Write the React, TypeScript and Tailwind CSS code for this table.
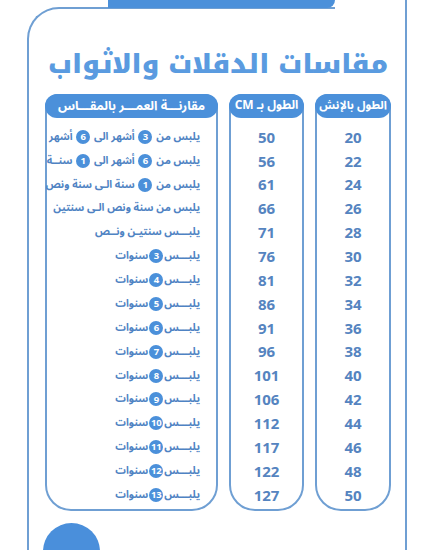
import React from "react";

const inches = [20, 22, 24, 26, 28, 30, 32, 34, 36, 38, 40, 42, 44, 46, 48, 50];
const cms = [50, 56, 61, 66, 71, 76, 81, 86, 91, 96, 101, 106, 112, 117, 122, 127];

const Badge: React.FC<{ n: number }> = ({ n }) => (
  <span className="inline-flex items-center justify-center w-[14px] h-[14px] mx-[1px] rounded-full bg-[#4b90da] text-white text-[9.5px] font-bold align-middle font-['Open_Sans',sans-serif] leading-none">
    {n}
  </span>
);

const ages: React.ReactNode[] = [
  <>يلبس من <Badge n={3} /> أشهر الى <Badge n={6} /> أشهر</>,
  <>يلبس من <Badge n={6} /> أشهر الى <Badge n={1} /> سنــة</>,
  <>يلبس من <Badge n={1} /> سنة الـى سنة ونص</>,
  <>يلبس من سنة ونص الـى سنتين</>,
  <>يلبـــس سنتيـن ونــص</>,
  ...[3, 4, 5, 6, 7, 8, 9, 10, 11, 12, 13].map((n) => (
    <>
      يلبـــس<Badge n={n} />سنوات
    </>
  )),
];

const Column: React.FC<{ title: string; width: string; size: string; children: React.ReactNode }> = ({
  title,
  width,
  size,
  children,
}) => (
  <div className={`${width} border-2 border-[#6f9fd3] rounded-t-[13px] rounded-b-[26px] pb-[2px]`}>
    <div
      dir="rtl"
      className={`h-[24px] -mx-[2px] -mt-[2px] bg-[#4b90da] rounded-[12px] flex items-center justify-center text-white ${size} font-bold whitespace-nowrap leading-none`}
    >
      {title}
    </div>
    <div className="pt-[7px]">{children}</div>
  </div>
);

export default function App() {
  return (
    <div className="relative w-[433px] h-[550px] overflow-hidden bg-white font-['Noto_Sans_Arabic','DejaVu_Sans',sans-serif]">
      {/* top tab */}
      <div className="absolute left-[108px] top-0 w-[227px] h-[8px] bg-[#4b90da] rounded-br-[9px] z-10" />
      {/* hide top border right of tab, extend right line */}
      <div className="absolute left-[335px] top-0 w-[71px] h-[11px] bg-white z-10" />
      <div className="absolute left-[405px] top-0 w-[2px] h-[550px] bg-[#6f9fd3] z-20" />

      <div className="ml-[27px] mt-[7px] w-[380px] h-[560px] border-l-2 border-t-2 border-[#6f9fd3] rounded-tl-[32px]">
        <h1
          dir="rtl"
          className="mt-[30px] h-[52px] flex items-center justify-center text-[26px] font-black text-[#5a9be0] leading-none whitespace-nowrap font-['Noto_Kufi_Arabic','DejaVu_Sans',sans-serif]"
        >
          مقاسات الدقلات والاثواب
        </h1>

        <div className="mt-[3px] ml-[16px] flex gap-[11px]">
          <Column title="مقارنـــة العمـــر بالمقـــاس" width="w-[173px]" size="text-[12.5px]">
            {ages.map((a, i) => (
              <div
                key={i}
                dir="rtl"
                className="h-[23.87px] flex items-center pr-[16px] text-[10.5px] font-bold text-[#4f83c3] whitespace-nowrap leading-none"
              >
                <span>{a}</span>
              </div>
            ))}
          </Column>
          <Column title="الطول بـ CM" width="w-[75px]" size="text-[12px]">
            {cms.map((c) => (
              <div
                key={c}
                className="h-[23.87px] flex items-center justify-center text-[15px] font-bold text-[#5584c0] font-['Open_Sans',sans-serif]"
              >
                {c}
              </div>
            ))}
          </Column>
          <Column title="الطول بالإنش" width="w-[76px]" size="text-[11.5px]">
            {inches.map((c) => (
              <div
                key={c}
                className="h-[23.87px] flex items-center justify-center text-[15px] font-bold text-[#5584c0] font-['Open_Sans',sans-serif]"
              >
                {c}
              </div>
            ))}
          </Column>
        </div>
      </div>

      <div className="absolute left-[43px] top-[523px] w-[57px] h-[57px] rounded-full bg-[#4a8fdb]" />
    </div>
  );
}
